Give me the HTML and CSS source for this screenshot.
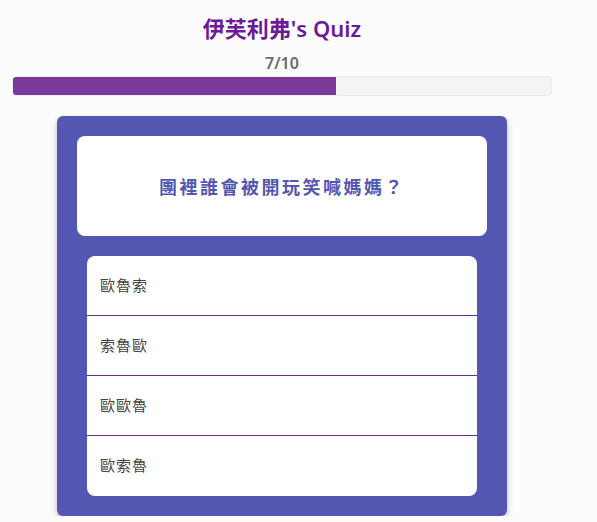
FILE: index.html
```html
<!DOCTYPE html>
<html lang="zh-Hant">
<head>
    <meta charset="UTF-8">
    <meta name="viewport" content="width=device-width, initial-scale=1.0">
    <title>伊芙利弗's Quiz</title>
    <link rel="stylesheet" href="styles.css">
</head>
<body>
    <div class="page">
        <h1 class="title">伊芙利弗's Quiz</h1>
        <div class="count">7/10</div>
        <div class="bar"><div class="bar-fill" style="width:60%"></div></div>

        <div class="card">
            <div class="question">團裡誰會被開玩笑喊媽媽？</div>
            <ul class="answers">
                <li>歐魯索</li>
                <li>索魯歐</li>
                <li>歐歐魯</li>
                <li>歐索魯</li>
            </ul>
        </div>
    </div>
</body>
</html>
```

FILE: styles.css
```css
body { margin: 0; background: #fcfcfc; font-family: "Noto Sans", "Noto Sans CJK TC", sans-serif; }
.page { width: 540px; margin-left: 12px; }
.title { margin: 0; padding-top: 13px; height: 30px; line-height: 30px; text-align: center; font-size: 22px; font-weight: 600; color: #6a1b9a; }
.count { margin-top: 7px; height: 26px; line-height: 26px; text-align: center; font-size: 16px; font-weight: 600; color: #6b6b6b; }
.bar { height: 20px; background: #f4f4f4; border: 1px solid #ececec; box-sizing: border-box; border-radius: 4px; overflow: hidden; }
.bar-fill { height: 100%; background: #7b3a9a; }
.card { width: 450px; margin: 20px auto 0; padding: 20px 0; box-sizing: border-box; background: #5457b1; border-radius: 6px; box-shadow: 0 3px 6px rgba(0,0,0,0.25); }
.question { height: 100px; margin: 0 20px; display: flex; align-items: center; justify-content: center; background: #fff; border-radius: 8px; color: #5457b1; font-size: 18px; font-weight: bold; letter-spacing: 2.5px; }
.answers { list-style: none; margin: 20px 30px 0; padding: 0; background: #fff; border-radius: 8px; }
.answers li { height: 59px; line-height: 59px; padding-left: 13px; font-size: 15px; letter-spacing: 1px; color: #444; border-bottom: 1px solid #6a2c8a; }
.answers li:last-child { height: 60px; border-bottom: none; }
```
